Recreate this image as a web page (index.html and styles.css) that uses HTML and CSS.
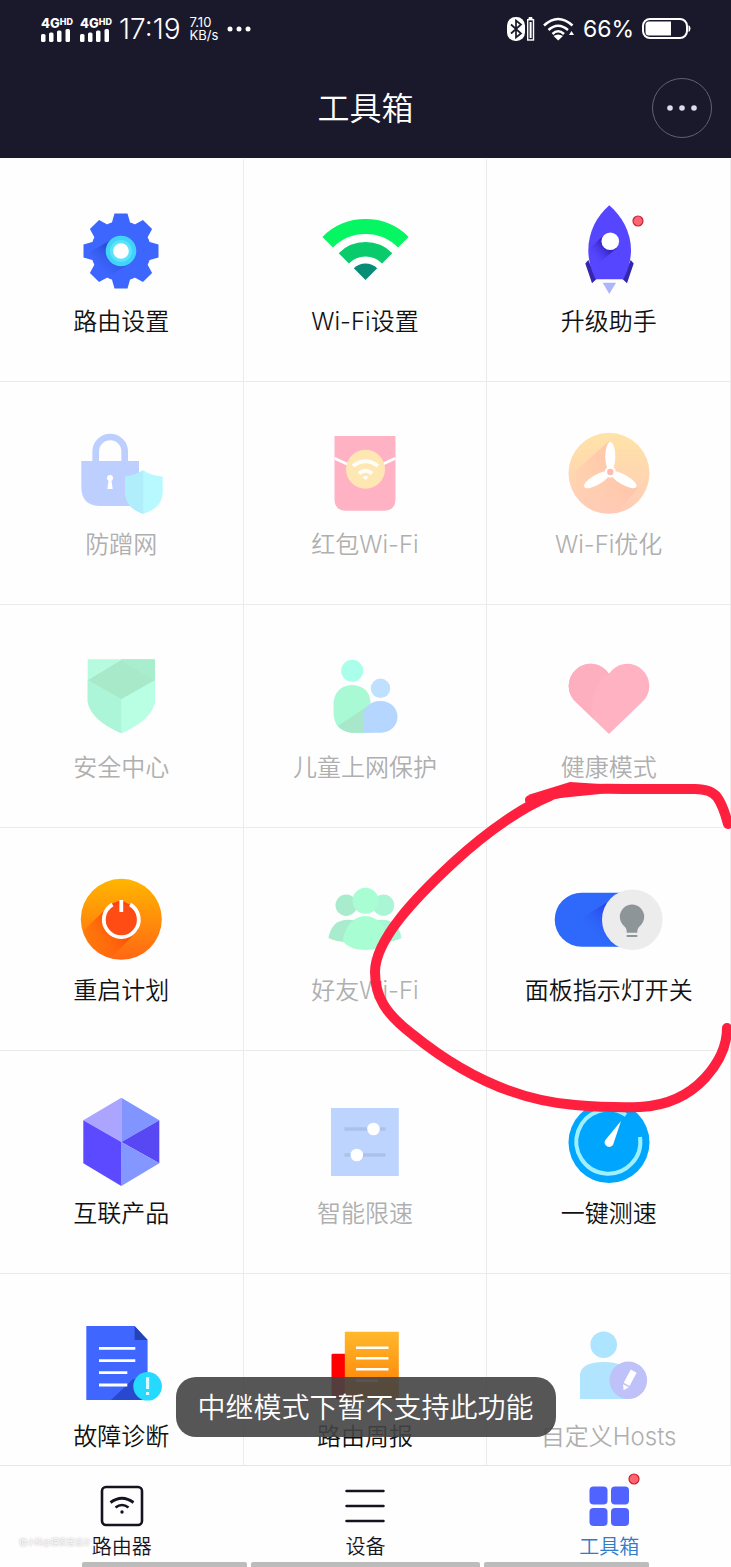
FILE: index.html
```html
<!DOCTYPE html>
<html lang="zh-CN">
<head>
<meta charset="utf-8">
<meta name="viewport" content="width=device-width, initial-scale=1">
<title>工具箱</title>
<link rel="stylesheet" href="styles.css">
</head>
<body>
<header class="top">
  <div class="status">
    <div class="status-side">
      <div class="signal"><span class="signal-net">4G<sup>HD</sup></span>
        <svg width="30" height="13" viewBox="0 0 30 13" fill="#fff"><rect x="0" y="5" width="4.500" height="8" rx="1.500"/><rect x="8" y="3.500" width="4.500" height="9.500" rx="1.500"/><rect x="16" y="1.500" width="4.500" height="11.500" rx="1.500"/><rect x="24.500" y="0" width="4.500" height="13" rx="1.500"/></svg>
      </div>
      <div class="signal"><span class="signal-net">4G<sup>HD</sup></span>
        <svg width="30" height="13" viewBox="0 0 30 13" fill="#fff"><rect x="0" y="5" width="4.500" height="8" rx="1.500"/><rect x="8" y="3.500" width="4.500" height="9.500" rx="1.500"/><rect x="16" y="1.500" width="4.500" height="11.500" rx="1.500"/><rect x="24.500" y="0" width="4.500" height="13" rx="1.500"/></svg>
      </div>
      <time class="clock">17:19</time>
      <div class="speed"><span>7.10</span><span>KB/s</span></div>
      <svg width="24" height="6" viewBox="0 0 24 6" fill="#fff"><circle cx="3" cy="3" r="2.500"/><circle cx="12" cy="3" r="2.500"/><circle cx="21" cy="3" r="2.500"/></svg>
    </div>
    <div class="status-side status-right">
      <svg width="28" height="24" viewBox="0 0 28 24"><rect x="0" y="0" width="18" height="24" rx="8.500" fill="#fff"/><path d="M4 7.500 14 16.500 9 20.500V3.500L14 7.500 4 16.500" fill="none" stroke="#1a192b" stroke-width="1.700"/><path d="M22 2V.5h3V2" fill="#fff" stroke="#fff"/><rect x="20.700" y="2.700" width="5.800" height="20.300" fill="none" stroke="#fff" stroke-width="1.400"/><rect x="22.600" y="5" width="2" height="16" fill="#fff"/></svg>
      <svg width="32" height="24" viewBox="0 0 32 24"><g fill="none" stroke="#fff" stroke-width="2.500"><path d="M1 8.500Q15 -4.500 29.500 8.500"/><path d="M5.500 13Q15 4.500 25 13"/><path d="M9.500 17Q15 11.500 21 17"/></g><path d="M10.500 19Q15 16 20 19L15.200 23.500Z" fill="#fff"/><path d="M26 18 28.500 14 31 18Z" fill="#fff"/></svg>
      <span class="percent">66%</span>
      <svg width="49" height="22" viewBox="0 0 49 22"><rect x="1" y="1" width="44" height="19" rx="7" fill="none" stroke="#fff" stroke-width="2"/><path d="M7 3.500H29V17.500H7Q3.500 17.500 3.500 14V7Q3.500 3.500 7 3.500Z" fill="#fff"/><path d="M46.500 7Q48.500 8 48.500 10.500T46.500 14Z" fill="#fff"/></svg>
    </div>
  </div>
  <div class="titlebar">
    <h1>工具箱</h1>
    <button class="more" aria-label="更多"><svg width="32" height="8" viewBox="0 0 32 8" fill="#dcdcf0"><circle cx="4" cy="4" r="2.800"/><circle cx="16" cy="4" r="2.800"/><circle cx="28" cy="4" r="2.800"/></svg></button>
  </div>
</header>

<main class="tools">
  <div class="grid">
    <button class="tool">
      <svg class="icon" viewBox="0 0 120 112"><defs><linearGradient id="gearShade" x1="1" y1="0" x2="0" y2="1"><stop offset=".3" stop-color="#2440c8"/><stop offset=".85" stop-color="#3d68ff" stop-opacity="0"/></linearGradient><path id="tooth" d="M50.500 30 53.500 19.500H66.500L69.500 30Z"/></defs>
      <g fill="#3d66ff"><circle cx="60" cy="57" r="30"/><use href="#tooth"/><use href="#tooth" transform="rotate(45 60 57)"/><use href="#tooth" transform="rotate(90 60 57)"/><use href="#tooth" transform="rotate(135 60 57)"/><use href="#tooth" transform="rotate(180 60 57)"/><use href="#tooth" transform="rotate(225 60 57)"/><use href="#tooth" transform="rotate(270 60 57)"/><use href="#tooth" transform="rotate(315 60 57)"/></g>
      <path d="M50 46 29 58 45 84 71 68Z" fill="url(#gearShade)"/><circle cx="60" cy="57" r="15.300" fill="#3fd4f8"/><circle cx="60" cy="57" r="11" fill="#5ce2fa"/><circle cx="60" cy="57" r="7.800" fill="#fff"/></svg>
      <span>路由设置</span>
    </button>
    <button class="tool">
      <svg class="icon" viewBox="0 0 120 112"><path d="M22.700 48.200A53.500 53.500 0 0 1 98.300 48.200" fill="none" stroke="#06f563" stroke-width="15"/><path d="M38.800 64.300A30.700 30.700 0 0 1 82.200 64.300" fill="none" stroke="#0acb6c" stroke-width="14.500"/><path d="M60.500 86 48.800 74.300A16.500 16.500 0 0 1 72.200 74.300Z" fill="#078c76"/></svg>
      <span>Wi-Fi设置</span>
    </button>
    <button class="tool">
      <svg class="icon" viewBox="0 0 120 112"><defs><linearGradient id="rocketShade" x1="1" y1="0" x2="0" y2="1"><stop offset=".35" stop-color="#3423c0"/><stop offset=".8" stop-color="#5646ff" stop-opacity="0"/></linearGradient></defs>
      <path d="M39.300 66 36.300 69.500 43 89.300 47.500 85ZM81.700 66 84.700 69.500 78 89.300 73.500 85Z" fill="#3526ae"/><path d="M60.300 11.300C48 22 39.300 38 39.300 56C39.300 68 43 78 46.700 85.300H74.300C78 78 82 68 82 56C82 38 72.600 22 60.300 11.300Z" fill="#5646ff"/><path d="M54 42 40 55Q40 63 44 74L68 54Z" fill="url(#rocketShade)"/><circle cx="61.300" cy="47.300" r="8.800" fill="#fff"/><path d="M53.700 88.700H67L60.300 100Z" fill="#adb5fb"/><circle cx="89" cy="27" r="5" fill="#ff6470" stroke="#bd283e" stroke-width="1.200"/></svg>
      <span>升级助手</span>
    </button>

    <button class="tool" disabled>
      <svg class="icon" viewBox="0 0 120 112"><path d="M34.700 45V34.500A14.500 14.500 0 0 1 63.700 34.500V45" fill="none" stroke="#bccfff" stroke-width="6.700"/><path d="M20.300 44H78V89H38Q20.300 88 20.300 70Z" fill="#bccfff"/><circle cx="49" cy="61" r="3" fill="#fff"/><path d="M47.800 62H50.200L51.700 72H46.300Z" fill="#fff"/><path d="M82.200 53.300Q90 58.500 101.700 59.700V76Q101 91 82.200 97Q64.500 91 64.300 76V59.700Q74 58.500 82.200 53.300Z" fill="#b8f8ff"/><path d="M82.200 53.300V97Q64.500 91 64.300 76V59.700Q74 58.500 82.200 53.300Z" fill="#afeefa"/></svg>
      <span>防蹭网</span>
    </button>
    <button class="tool" disabled>
      <svg class="icon" viewBox="0 0 120 112"><path d="M29.500 19H90.500V83Q90 93 80.500 93.700H39.500Q30 93 29.500 83Z" fill="#ffb2c3"/><path d="M29.500 41.300 44 48Q60 53 76 48L90.500 41.300" fill="none" stroke="#fff" stroke-width="2.800"/><circle cx="60.500" cy="52.300" r="19.500" fill="#ffe7b3"/><g fill="none" stroke="#fffdf7" stroke-width="4"><path d="M48 49Q60.500 39.500 73 49"/><path d="M54 56.500Q60.500 51 67 56.500"/></g><path d="M57.500 60Q60.500 58 63.500 60L60.500 63Z" fill="#fffdf7"/></svg>
      <span>红包Wi-Fi</span>
    </button>
    <button class="tool" disabled>
      <svg class="icon" viewBox="0 0 120 112"><defs><linearGradient id="fanFill" x1="0" y1="0" x2="0" y2="1"><stop offset="0" stop-color="#ffe3a8"/><stop offset="1" stop-color="#ffcbb8"/></linearGradient><linearGradient id="fanShade" x1="1" y1="0" x2="0" y2="1"><stop offset=".4" stop-color="#ffc4aa"/><stop offset="1" stop-color="#ffcdb2" stop-opacity="0"/></linearGradient></defs><circle cx="60" cy="56.300" r="40.500" fill="url(#fanFill)"/><path d="M60 24 27 54Q24 75 38 90Q53 101 70 94L89 71 61 54Z" fill="url(#fanShade)" opacity=".8"/><g fill="#fff"><ellipse cx="61.300" cy="39.500" rx="5" ry="14.500"/><ellipse cx="61.300" cy="39.500" rx="5" ry="14.500" transform="rotate(120 61.300 55)"/><ellipse cx="61.300" cy="39.500" rx="5" ry="14.500" transform="rotate(240 61.300 55)"/><circle cx="61.300" cy="55" r="5.500"/></g><circle cx="61.300" cy="55" r="3.200" fill="#ffbdb2"/></svg>
      <span>Wi-Fi优化</span>
    </button>

    <button class="tool" disabled>
      <svg class="icon" viewBox="0 0 120 112"><path d="M26.700 19.300H94V62Q90 80 60.300 93.300Q30 80 26.700 62Z" fill="#b6fbe0"/><path d="M60.300 20 94 40.300V19.300H60.300Z" fill="#a9edcf"/><path d="M60.300 20 94 40.300 60.300 59.300 26.700 40.300Z" fill="#a8e9ca"/><path d="M26.700 40.300 60.300 59.300V93.300Q30 80 26.700 62Z" fill="#adf5d8"/><path d="M94 40.300 60.300 59.300V93.300Q90 80 94 62Z" fill="#b8ffe3"/></svg>
      <span>安全中心</span>
    </button>
    <button class="tool" disabled>
      <svg class="icon" viewBox="0 0 120 112"><circle cx="47.200" cy="30.700" r="11" fill="#a9ffe9"/><path d="M47.200 45Q65.800 46 65.800 66V92.700H47Q28.500 91 28.500 72V64Q29.500 46 47.200 45Z" fill="#a9f9d4"/><path d="M65.800 64 33 86Q39 92.700 47 92.700H60Z" fill="#a8e7ca"/><circle cx="75.500" cy="48.300" r="9.700" fill="#bfe0ff"/><path d="M75 61C87 61 92.500 69 92.500 77S86 92.700 76 92.700H58V78C58 68 65 61 75 61Z" fill="#b5d6ff"/></svg>
      <span>儿童上网保护</span>
    </button>
    <button class="tool" disabled>
      <svg class="icon" viewBox="0 0 120 112"><path d="M60 94 27.400 62.600A22 22 0 1 1 60 33.700A22 22 0 1 1 92.600 62.600Z" fill="#ffb3c2"/><path d="M60 33.700Q42 46 43.500 68Q42 72 45 79.500L27.400 62.600A22 22 0 1 1 60 33.700Z" fill="#fdafbf"/></svg>
      <span>健康模式</span>
    </button>

    <button class="tool">
      <svg class="icon" viewBox="0 0 120 112"><defs><linearGradient id="powerFill" x1="0" y1="0" x2="0" y2="1"><stop offset="0" stop-color="#ffb600"/><stop offset="1" stop-color="#ff6714"/></linearGradient><linearGradient id="powerShade" x1="1" y1="0" x2="0" y2="1"><stop offset=".35" stop-color="#ff4208"/><stop offset=".95" stop-color="#ff7d08" stop-opacity=".1"/></linearGradient></defs><circle cx="60.300" cy="56.300" r="40.500" fill="url(#powerFill)"/><path d="M50 41 22 68Q28 90 50 95L77 67 73 44 60 37Z" fill="url(#powerShade)"/><circle cx="60.300" cy="57" r="16" fill="#ff4c14"/><path d="M51.500 41.500A17.500 17.500 0 1 0 69.100 41.500" fill="none" stroke="#fff" stroke-width="3.800"/><path d="M60.300 37V49" stroke="#fff" stroke-width="3.800"/></svg>
      <span>重启计划</span>
    </button>
    <button class="tool" disabled>
      <svg class="icon" viewBox="0 0 120 112"><g fill="#a8ebcd"><circle cx="41.200" cy="42.300" r="10.700"/><path d="M51 57.500Q27 53 23.500 75Q32 79.500 45 79Z"/></g><g fill="#aaf5d6"><circle cx="78.500" cy="42.300" r="10.700"/><path d="M70 57.500Q93 53 96.500 75Q88 79.500 75 79Z"/></g><g fill="#a8fdd2"><circle cx="60.500" cy="37.700" r="13"/><path d="M60.500 53Q79 54 83.500 78Q76 87 60.500 87T37.500 78Q42 54 60.500 53Z"/></g></svg>
      <span>好友Wi-Fi</span>
    </button>
    <button class="tool">
      <svg class="icon" viewBox="0 0 120 112"><defs><linearGradient id="switchShade" x1="1" y1="0" x2="0" y2=".8"><stop offset=".2" stop-color="#2a2be0"/><stop offset=".8" stop-color="#2e68fb" stop-opacity="0"/></linearGradient></defs><path d="M32.700 29.700H84V83.700H32.700A27 27 0 0 1 32.700 29.700Z" fill="#2e69fb"/><path d="M60 38 25 60 45 83.700H84V38Z" fill="url(#switchShade)"/><circle cx="83.300" cy="56.700" r="30.300" fill="#ececec"/><path d="M77.700 69.700Q78 65 74.500 62.500A12.200 12.200 0 1 1 91.500 62.500Q88 65 88.300 69.700Z" fill="#8e9599"/><path d="M77.700 73H88.300" stroke="#8e9599" stroke-width="2"/></svg>
      <span>面板指示灯开关</span>
    </button>

    <button class="tool">
      <svg class="icon" viewBox="0 0 120 112"><path d="M60.300 11.700 22.300 34.300 60.300 56Z" fill="#aca5ff"/><path d="M60.300 11.700 98.300 34.300 60.300 56Z" fill="#8095ff"/><path d="M98.300 34.300V77.300L60.300 56Z" fill="#5848f3"/><path d="M60.300 56 98.300 77.300 60.300 100Z" fill="#8496ff"/><path d="M22.300 34.300 60.300 56V100L22.300 77.300Z" fill="#5b4aff"/></svg>
      <span>互联产品</span>
    </button>
    <button class="tool" disabled>
      <svg class="icon" viewBox="0 0 120 112"><path d="M26 22H93.800V90H26Z" fill="#bdd4ff"/><path d="M39.500 43H80.500M39.500 69H80.500" stroke="#abc1ea" stroke-width="3.600"/><g fill="#fff"><circle cx="68.500" cy="43" r="6.300"/><circle cx="51.800" cy="69" r="6.300"/></g></svg>
      <span>智能限速</span>
    </button>
    <button class="tool">
      <svg class="icon" viewBox="0 0 120 112"><circle cx="60" cy="56.500" r="40.500" fill="#00a5fd"/><path d="M77 29A32 32 0 1 0 91 51" fill="none" stroke="#9ff0ff" stroke-width="4"/><path d="M72 35 64 59Q60 63 56.500 59Q54 56 58 52Z" fill="#fff"/></svg>
      <span>一键测速</span>
    </button>

    <button class="tool">
      <svg class="icon" viewBox="0 0 120 112"><path d="M25.300 17H73.600L86.600 31V91H25.300Z" fill="#3f66ff"/><path d="M73.600 17 86.600 31H73.600Z" fill="#2643b4"/><path d="M72 70 50 91H86V70Z" fill="#2848cf"/><path d="M38 39.300H74.300M38 51.700H74.300M38 63.700H66.300M38 76H66.300" stroke="#fff" stroke-width="2.800"/><circle cx="86.600" cy="77.300" r="14.300" fill="#26d9ff"/><path d="M86.600 68V80M86.600 83V86" stroke="#d9faff" stroke-width="3.200"/></svg>
      <span>故障诊断</span>
    </button>
    <button class="tool">
      <svg class="icon" viewBox="0 0 120 112"><defs><linearGradient id="newsFill" x1="0" y1="0" x2="0" y2="1"><stop offset="0" stop-color="#ffb92c"/><stop offset="1" stop-color="#ff7a00"/></linearGradient></defs><path d="M28 44.700H44V90H32Q26.500 89 26.500 84V46Q26.500 44.700 28 44.700Z" fill="#fe0000"/><path d="M39.800 22.700H93.800V90H39.800Z" fill="url(#newsFill)"/><path d="M51 38.700H83.500M51 49.300H83.500M51 60.300H83.500M51 71.700H73" stroke="#fff" stroke-width="2.600"/></svg>
      <span>路由周报</span>
    </button>
    <button class="tool" disabled>
      <svg class="icon" viewBox="0 0 120 112"><circle cx="54.700" cy="35.700" r="13.300" fill="#ade4ff"/><path d="M31 90V65Q33 53 54.700 53T79 65V90Z" fill="#b0e4ff"/><circle cx="79.300" cy="71.300" r="18.800" fill="#bfc1f9"/><g transform="rotate(28 80 71)"><path d="M76.700 61H83.300V76H76.700ZM76.700 77.500H83.300L80 82.500Z" fill="#fff"/></g></svg>
      <span>自定义Hosts</span>
    </button>
  </div>
  <svg class="scribble" width="371" height="360" viewBox="0 0 371 360" aria-hidden="true"><g fill="none" stroke="#ff1f3f" stroke-width="10" stroke-linecap="round" stroke-linejoin="round"><path d="M170 30 213 20Q240 18 265 19H335Q351 19 357 27T368 54"/><path d="M190 26C165 36 130 59 94 92C55 128 15 170 15 202C15 227 26 244 52 264C95 299 150 330 215 335Q250 338 280 337Q320 335 345 308Q367 284 367 258"/></g><path d="M168 25 210 12 255 15 240 24 190 29Z" fill="#ff1f3f"/></svg>
</main>

<nav class="tabs">
  <a class="tab" href="#router">
    <svg class="tab-icon" viewBox="0 0 44 44" fill="none" stroke="#14131f"><rect x="2" y="3" width="40" height="38" rx="4" stroke-width="2.600"/><path d="M10.500 18.500Q22 10 33.500 18.500" stroke-width="2.800"/><path d="M15.500 23.500Q22 18.500 28.500 23.500" stroke-width="2.600"/><circle cx="22" cy="28" r="1.700" fill="#14131f" stroke="none"/></svg>
    <span>路由器</span>
  </a>
  <a class="tab" href="#devices">
    <svg class="tab-icon" viewBox="0 0 44 44"><path d="M3.500 7H40.500M3.500 22H40.500M3.500 37H40.500" stroke="#14131f" stroke-width="2.500" stroke-linecap="round"/></svg>
    <span>设备</span>
  </a>
  <a class="tab tab-active" href="#tools" aria-current="page">
    <svg class="tab-icon" viewBox="0 0 44 44" fill="#5063ff"><rect x="2.500" y="2.500" width="18" height="18" rx="4"/><rect x="24" y="2.500" width="18" height="18" rx="4"/><rect x="2.500" y="24" width="18" height="18" rx="4"/><rect x="24" y="24" width="18" height="18" rx="4"/><circle cx="47" cy="-5" r="5" fill="#ff6470" stroke="#c8202f" stroke-width="1.200"/></svg>
    <span>工具箱</span>
  </a>
  <div class="hints"><i></i><i></i><i></i></div>
  <small class="mark">值小码@摆家居设计</small>
</nav>
<div class="toast" role="status">中继模式下暂不支持此功能</div>
</body>
</html>
```
FILE: styles.css
```css
* { box-sizing: border-box; }

body {
  margin: 0;
  height: 100vh;
  position: relative;
  display: flex;
  flex-direction: column;
  background: #fefefe;
  color: #111;
  font-family: Inter, "Noto Sans CJK SC", sans-serif;
  font-weight: 350;
}

button {
  font: inherit;
  color: inherit;
  background: none;
  border: 0;
  padding: 0;
}

svg { display: block; flex: none; }

.top { background: #1a192b; color: #fff; }

.status {
  display: flex;
  justify-content: space-between;
  height: 56px;
  padding: 2px 40px 0 41px;
}

.status-side { display: flex; align-items: center; gap: 9px; }

.status-right { gap: 8px; }

.signal { display: flex; flex-direction: column; width: 30px; }

.signal-net {
  font-size: 13px;
  line-height: 12px;
  font-weight: 800;
  white-space: nowrap;
}

.signal-net sup { font-size: 9px; line-height: 1; vertical-align: 3px; }

.clock { font-size: 28px; font-weight: 350; line-height: 32px; }

.speed {
  display: flex;
  flex-direction: column;
  font-size: 13px;
  line-height: 13px;
  font-weight: 400;
}

.percent { font-size: 23px; line-height: 32px; font-weight: 400; }

.titlebar {
  height: 102px;
  padding: 2px 19px 0;
  display: grid;
  grid-template-columns: 1fr auto 1fr;
  align-items: center;
}

.titlebar h1 {
  grid-column: 2;
  margin: 0;
  padding-top: 2px;
  font-size: 32px;
  line-height: 48px;
  font-weight: 350;
}

.more {
  justify-self: end;
  width: 60px;
  height: 60px;
  display: grid;
  place-items: center;
  border: 1px solid #62616e;
  border-radius: 50%;
}

.tools { position: relative; flex: 1; min-height: 0; overflow: hidden; }

.grid {
  display: grid;
  grid-template-columns: repeat(3, 1fr);
  grid-auto-rows: 223px;
  padding-top: 1px;
}

.tool {
  display: flex;
  flex-direction: column;
  align-items: center;
  justify-content: flex-start;
  padding-top: 35px;
  border-right: 1px solid #ebebeb;
  border-bottom: 1px solid #ebebeb;
  font-size: 24px;
  line-height: 32px;
  white-space: nowrap;
}

.tool:disabled { color: #afafaf; }

.icon { width: 120px; height: 112px; }

.scribble { position: absolute; right: 0; top: 612px; pointer-events: none; }

.tabs {
  position: relative;
  display: grid;
  grid-template-columns: repeat(3, 1fr);
  height: 102px;
  border-top: 1px solid #e6e6e6;
}

.tab {
  display: flex;
  flex-direction: column;
  align-items: center;
  gap: 5px;
  padding-top: 18px;
  color: #14131f;
  font-size: 20px;
  line-height: 28px;
  text-decoration: none;
}

.tab-active { color: #2f7cc8; }

.tab-icon { width: 44px; height: 44px; overflow: visible; }

.hints {
  position: absolute;
  inset: auto 82px 0;
  display: grid;
  grid-template-columns: 165fr 229fr 165fr;
  gap: 4px;
}

.hints i { height: 5px; background: #bcbcbc; border-radius: 2px 2px 0 0; }

.mark {
  position: absolute;
  left: 19px;
  bottom: 18px;
  font-size: 8px;
  line-height: 14px;
  color: #fff;
  text-shadow: 0 0 2px #999;
}

.toast {
  position: absolute;
  left: 50%;
  bottom: 130px;
  transform: translateX(-50%);
  padding: 11px 22px 9px;
  border-radius: 20px;
  background: rgba(68, 68, 68, .9);
  color: #fff;
  font-size: 28px;
  line-height: 40px;
  white-space: nowrap;
}
```
